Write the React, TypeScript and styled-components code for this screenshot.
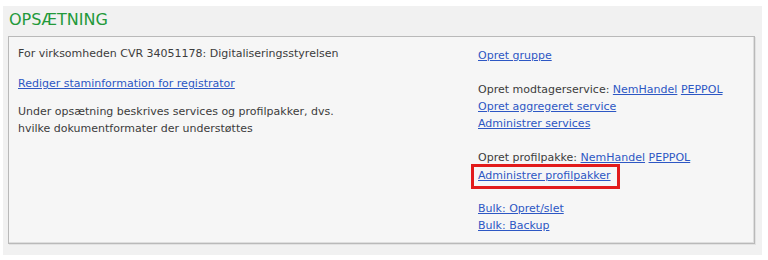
import React from 'react'
import styled, { createGlobalStyle } from 'styled-components'

const GlobalStyle = createGlobalStyle`
  html, body {
    margin: 0;
    padding: 0;
    background: #ffffff;
  }
  body {
    font-family: "DejaVu Sans", Verdana, sans-serif;
  }
`

const Page = styled.div`
  width: 768px;
  height: 260px;
  padding: 6px 6px 5px 3px;
  box-sizing: border-box;
`

const Panel = styled.section`
  height: 100%;
  background: #f1f1f1;
  padding: 3px 7px 11px 5px;
  box-sizing: border-box;
  display: flex;
  flex-direction: column;
`

const Title = styled.h2`
  margin: 0 0 6px 1px;
  font-size: 16px;
  font-weight: normal;
  line-height: 21px;
  color: #23993a;
`

const Box = styled.div`
  flex: 1;
  min-height: 0;
  background: #f6f6f6;
  border: 1px solid #b9b9b9;
  box-shadow: inset -1px -1px 0 #dedede, 1px 1px 0 #e2e2e2;
  display: grid;
  grid-template-columns: 460px 1fr;
  padding: 8px 9px;
  font-size: 11px;
  line-height: 17px;
  color: #3c3c3c;
`

const Column = styled.div`
  display: flex;
  flex-direction: column;
`

const Para = styled.p<{ $gap?: number }>`
  margin: 0 0 ${p => p.$gap ?? 13}px 0;
`

const Group = styled.div`
  display: flex;
  flex-direction: column;
  align-items: flex-start;
  margin-bottom: 17px;

  &:last-child {
    margin-bottom: 0;
  }
`

const FirstGroup = styled(Group)`
  padding-top: 2px;
  margin-bottom: 17px;
`

const Link = styled.a`
  color: #2d57c4;
  text-decoration: underline;
  cursor: pointer;
`

const Highlight = styled.span`
  border: 3px solid #e21b1b;
  padding: 0 6px 2px 4px;
  margin: -2px 0 -6px -7px;
`

export default function App() {
  return (
    <>
      <GlobalStyle />
      <Page>
        <Panel>
          <Title>OPSÆTNING</Title>
          <Box>
            <Column>
              <Para>For virksomheden CVR 34051178: Digitaliseringsstyrelsen</Para>
              <Para $gap={11}><Link>Rediger staminformation for registrator</Link></Para>
              <Para>
                Under opsætning beskrives services og profilpakker, dvs.<br />
                hvilke dokumentformater der understøttes
              </Para>
            </Column>
            <Column>
              <FirstGroup>
                <Link>Opret gruppe</Link>
              </FirstGroup>
              <Group>
                <span>Opret modtagerservice: <Link>NemHandel</Link> <Link>PEPPOL</Link></span>
                <Link>Opret aggregeret service</Link>
                <Link>Administrer services</Link>
              </Group>
              <Group>
                <span>Opret profilpakke: <Link>NemHandel</Link> <Link>PEPPOL</Link></span>
                <Highlight><Link>Administrer profilpakker</Link></Highlight>
              </Group>
              <Group>
                <Link>Bulk: Opret/slet</Link>
                <Link>Bulk: Backup</Link>
              </Group>
            </Column>
          </Box>
        </Panel>
      </Page>
    </>
  )
}
